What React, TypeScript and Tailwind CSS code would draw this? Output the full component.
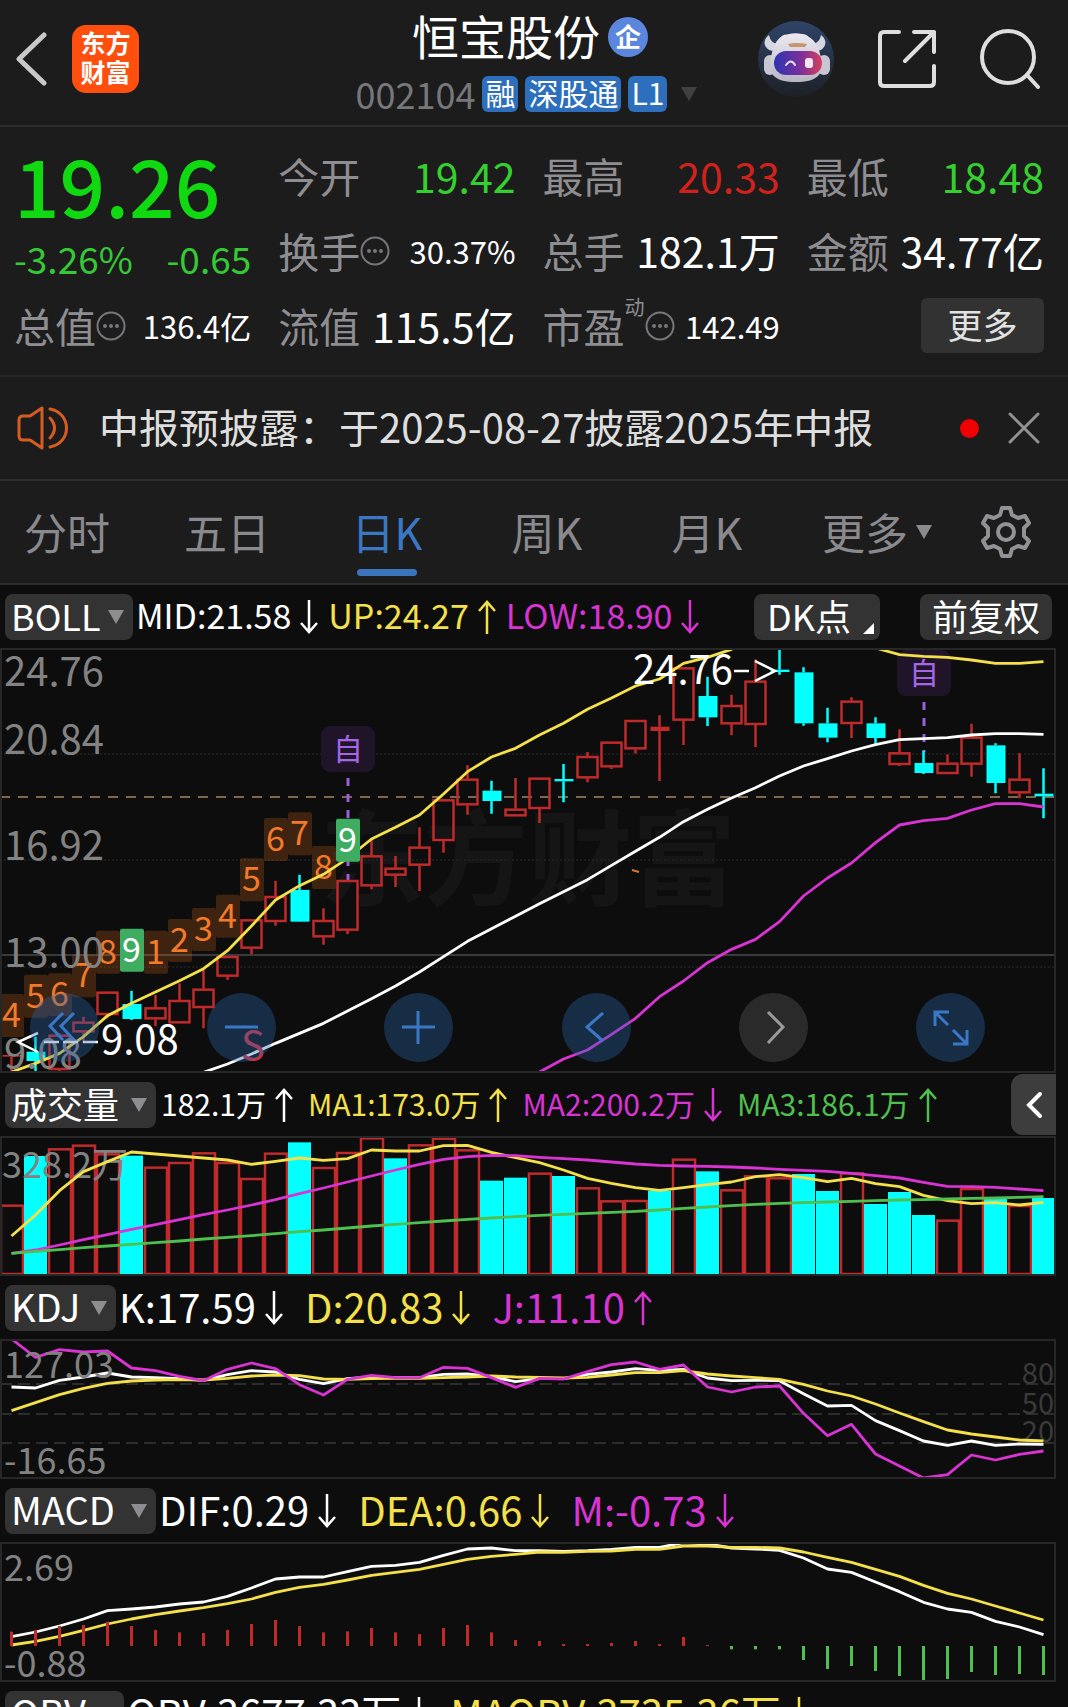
import type { ReactNode } from "react";

const STEP = 24;
const HALF = 11.5;
const CHART_WIDTH = 1056;

const RED = "#c02a2a";
const CYAN = "#04ffff";
const YELLOW = "#f3e04a";
const MAGENTA = "#d934d3";
const GREEN = "#4fbf4f";
const WHITE = "#ffffff";

const FONT = "'Noto Sans CJK SC', sans-serif";

// All series are sampled in thirds of a chart unit.
const unit = (value: number) => value / 3;
const centre = (index: number) => HALF + index * STEP;

type Candle = [kind: "up" | "down", high: number, top: number, bottom: number, low: number];

const candles: Candle[] = [
  ["up", 1245, 1245, 1250, 1298],
  ["down", 1190, 1235, 1263, 1297],
  ["up", 1180, 1184, 1290, 1298],
  ["up", 1130, 1145, 1177, 1210],
  ["up", 1055, 1055, 1125, 1135],
  ["down", 1052, 1092, 1137, 1140],
  ["up", 1065, 1102, 1138, 1158],
  ["up", 1030, 1080, 1150, 1150],
  ["up", 990, 1046, 1104, 1165],
  ["up", 948, 948, 1010, 1020],
  ["up", 838, 838, 926, 942],
  ["up", 722, 768, 846, 857],
  ["down", 704, 750, 845, 846],
  ["up", 805, 840, 892, 914],
  ["up", 720, 720, 872, 882],
  ["up", 600, 646, 739, 748],
  ["up", 648, 683, 707, 741],
  ["up", 562, 620, 677, 753],
  ["up", 478, 478, 603, 638],
  ["up", 376, 416, 496, 524],
  ["down", 422, 452, 483, 521],
  ["up", 414, 506, 529, 529],
  ["up", 413, 413, 507, 549],
  ["down", 372, 417, 424, 487],
  ["up", 336, 348, 415, 427],
  ["up", 305, 305, 382, 387],
  ["up", 240, 240, 328, 341],
  ["up", 226, 260, 273, 423],
  ["up", 82, 82, 242, 315],
  ["down", 110, 168, 232, 258],
  ["up", 164, 195, 253, 286],
  ["up", 58, 122, 255, 321],
  ["down", 25, 89, 96, 104],
  ["down", 82, 97, 250, 257],
  ["down", 203, 250, 293, 307],
  ["up", 172, 182, 252, 294],
  ["down", 232, 250, 294, 311],
  ["up", 268, 337, 375, 378],
  ["down", 332, 369, 399, 402],
  ["up", 343, 368, 402, 402],
  ["up", 251, 290, 374, 410],
  ["down", 310, 316, 429, 460],
  ["up", 340, 416, 460, 475],
  ["down", 385, 461, 469, 535],
];

const bollUp = [
  1296, 1270, 1240, 1190, 1127, 1090, 1056, 1022, 986, 932, 858, 780, 737, 703, 655, 597, 562, 525, 462, 395, 351, 325,
  285, 250, 208, 174, 138, 117, 70, 52, 28, -5, -30, -30, -30, -10, 24, 44, 49, 52, 60, 70, 70, 65,
];
const bollMid = [
  1297, 1272, 1242, 1210, 1180, 1150, 1113, 1076, 1038, 996, 950, 904, 866, 829, 791, 755, 719, 676, 634, 592, 545, 508,
  474, 443, 408, 378, 356, 333, 314, 299, 296, 293, 285, 281, 281, 283,
];
const bollLow = [
  1296, 1257, 1230, 1183, 1135, 1070, 1023, 968, 928, 898, 845, 768, 714, 669, 608, 555, 542, 535, 510, 491, 491, 501,
];

const countMarks: [top: number, count: number][] = [
  [1062, 4],
  [1004, 5],
  [1000, 6],
  [943, 7],
  [872, 8],
  [866, 9],
  [872, 1],
  [837, 2],
  [804, 3],
  [764, 4],
  [655, 5],
  [534, 6],
  [517, 7],
  [618, 8],
  [536, 9],
];

const volumeTops = [
  404, 258, 235, 224, 250, 257, 290, 276, 247, 276, 324, 248, 217, 291, 246, 202, 265, 223, 203, 238, 332, 323, 308, 318,
  352, 391, 390, 362, 266, 304, 358, 316, 322, 312, 363, 307, 402, 366, 435, 449, 354, 385, 405, 384,
];
const volumeDown = [1, 5, 12, 16, 20, 21, 23, 27, 29, 33, 34, 36, 37, 38, 41, 43];
const volumeMa1 = [
  498, 435, 362, 305, 275, 246, 252, 258, 264, 270, 283, 274, 264, 271, 266, 240, 243, 243, 227, 226, 247, 263, 278, 300,
  325, 340, 353, 361, 353, 344, 336, 320, 314, 323, 335, 325, 341, 350, 376, 392, 401, 398, 405, 397,
];
const volumeMa2 = [
  550, 540, 525, 509, 494, 478, 464, 449, 434, 420, 405, 389, 371, 354, 336, 318, 300, 283, 268, 260, 256, 257, 262, 266,
  270, 276, 282, 286, 288, 289, 291, 294, 298, 301, 304, 310, 317, 324, 337, 349, 350, 352, 357, 362,
];
const volumeMa3 = [
  550, 544, 539, 533, 528, 523, 518, 513, 507, 502, 497, 491, 485, 480, 474, 468, 463, 458, 453, 448, 444, 440, 436, 433,
  430, 427, 424, 420, 415, 411, 407, 403, 400, 398, 396, 394, 392, 390, 389, 387, 385, 384, 382, 380,
];

const kdjK = [
  201, 204, 181, 171, 159, 171, 173, 176, 181, 164, 152, 156, 178, 191, 176, 171, 173, 173, 163, 162, 170, 185, 176, 176,
  163, 156, 146, 151, 148, 174, 182, 181, 182, 221, 258, 256, 302, 332, 363, 376, 363, 376, 372, 373,
];
const kdjD = [
  272, 248, 224, 205, 190, 183, 180, 179, 180, 175, 168, 165, 167, 177, 178, 176, 175, 175, 173, 171, 168, 171, 172, 174,
  172, 165, 158, 158, 152, 162, 168, 173, 178, 193, 213, 228, 252, 279, 305, 330, 342, 351, 360, 363,
];
const kdjJ = [
  57, 112, 89, 96, 93, 144, 152, 169, 182, 148, 129, 146, 194, 225, 178, 166, 173, 173, 142, 145, 173, 202, 175, 177,
  155, 134, 126, 148, 135, 201, 216, 201, 198, 280, 347, 313, 402, 438, 474, 464, 405, 420, 403, 393,
];

const macdDif = [
  950, 936, 918, 897, 872, 867, 861, 852, 846, 829, 804, 777, 771, 771, 755, 739, 736, 727, 706, 687, 684, 692, 692, 694,
  692, 688, 682, 682, 668, 672, 684, 687, 691, 714, 747, 757, 786, 815, 847, 867, 877, 904, 921, 944,
];
const macdDea = [
  975, 964, 949, 931, 912, 897, 884, 873, 863, 851, 837, 817, 802, 793, 780, 766, 757, 748, 733, 718, 709, 703, 696, 697,
  694, 693, 688, 688, 678, 678, 682, 682, 684, 696, 712, 727, 748, 769, 796, 820, 837, 858, 879, 900,
];
const macdBars = [
  935, 930, 918, 915, 905, 918, 930, 937, 939, 930, 912, 900, 918, 937, 934, 924, 937, 942, 924, 915, 937, 960, 963, 972,
  972, 969, 963, 972, 951, 975, 988, 988, 988, 1020, 1047, 1038, 1053, 1068, 1083, 1077, 1056, 1065, 1062, 1065,
];
const MACD_BASE = 978;

const Series = ({ values, color, start = 0 }: { values: number[]; color: string; start?: number }) => (
  <polyline
    points={values.map((value, i) => `${centre(i + start)},${unit(value)}`).join(" ")}
    fill="none"
    stroke={color}
    strokeWidth={2.8}
    strokeLinejoin="round"
  />
);

const AxisLabel = ({ x = 4, y, size = 36, children }: { x?: number; y: number; size?: number; children: ReactNode }) => (
  <text x={x} y={y} fontSize={size} fill="#828282">
    {children}
  </text>
);

const Pane = ({ top, height, label, children }: { top: number; height: number; label: string; children: ReactNode }) => (
  <svg
    className="block w-full h-auto"
    viewBox={`0 ${top} ${CHART_WIDTH} ${height}`}
    fontFamily={FONT}
    role="img"
    aria-label={label}
  >
    {children}
    <rect x={1} y={top + 1} width={CHART_WIDTH - 2} height={height - 2} fill="none" stroke="#272727" strokeWidth={2} />
  </svg>
);

const Caret = ({ className = "" }: { className?: string }) => (
  <svg className={`shrink-0 ${className}`} width="16" height="14" viewBox="0 0 16 14" aria-hidden="true">
    <path d="M0 0h16L8 14z" fill="currentColor" />
  </svg>
);

const Dots = () => (
  <svg className="shrink-0" width="30" height="30" viewBox="0 0 30 30" fill="none" aria-hidden="true">
    <circle cx="15" cy="15" r="13.5" stroke="#77777b" strokeWidth="2" />
    <circle cx="9" cy="15" r="2" fill="#77777b" />
    <circle cx="15" cy="15" r="2" fill="#77777b" />
    <circle cx="21" cy="15" r="2" fill="#77777b" />
  </svg>
);

const Mascot = () => (
  <svg width="76" height="76" viewBox="0 0 76 76" aria-hidden="true">
    <defs>
      <linearGradient id="halo" x1="0" y1="0" x2="0" y2="1">
        <stop offset="0" stopColor="#2f4468" />
        <stop offset="1" stopColor="#1d2026" />
      </linearGradient>
      <linearGradient id="visor" x1="0" y1="0" x2="1" y2="0">
        <stop offset="0" stopColor="#2b35b0" />
        <stop offset="0.55" stopColor="#7a2f9c" />
        <stop offset="1" stopColor="#d6405c" />
      </linearGradient>
      <linearGradient id="shell" x1="0" y1="0" x2="0" y2="1">
        <stop offset="0" stopColor="#eceaf0" />
        <stop offset="1" stopColor="#b9b6c4" />
      </linearGradient>
    </defs>
    <circle cx="38" cy="38" r="38" fill="url(#halo)" />
    <path
      d="M11 14c-4 3-6 8-3 12 2 3 5 4 9 4l4-7c-5 0-9-3-10-9zM63 14c4 3 6 8 3 12-2 3-5 4-9 4l-4-7c5 0 9-3 10-9z"
      fill="#d6d6e2"
    />
    <rect x="6" y="34" width="12" height="20" rx="6" fill="#c9c6d3" />
    <rect x="60" y="34" width="12" height="20" rx="6" fill="#c9c6d3" />
    <path
      d="M24 15c2-2 5-1 7-2 4-1 9-1 13 0 3 0 5 1 7 3 7 4 11 13 12 22 4 16-5 23-25 23S9 54 13 38c1-10 4-18 11-23z"
      fill="url(#shell)"
    />
    <path d="M30 23q9-2 19 0l-2 3H32z" fill="#c8946d" />
    <rect x="16" y="30" width="48" height="24" rx="12" fill="url(#visor)" />
    <path d="M28 44q5-7 9 0" fill="none" stroke="#e8defa" strokeWidth="2" strokeLinecap="round" />
    <rect x="47" y="37" width="8" height="10" rx="3" fill="#f2e6f2" />
  </svg>
);

const Arrow = ({ up }: { up?: boolean }) => (
  <svg
    className="shrink-0 ml-[9px] mt-1"
    width="18"
    height="34"
    viewBox="0 0 18 34"
    fill="none"
    stroke="currentColor"
    strokeWidth="2.5"
    role="img"
    aria-label={up ? "升" : "降"}
  >
    <path d={up ? "M9 34V2M1 11l8-9 8 9" : "M9 0v32M1 23l8 9 8-9"} />
  </svg>
);

const Tag = ({ children }: { children: ReactNode }) => (
  <span className="flex items-center h-9 px-[3px] pb-[2px] rounded-md bg-[#2d6fbc] text-[30px] text-white">{children}</span>
);

const PickerButton = ({ name, size }: { name: string; size: string }) => (
  <button
    type="button"
    className={`flex flex-none items-center justify-between h-[46px] pl-[6px] pr-[9px] rounded-lg bg-[#333333] text-white ${size}`}
  >
    <span className="pb-1">{name}</span>
    <Caret className="text-[#8e8e92]" />
  </button>
);

type Reading = { text: string; up?: boolean; color: string };

const Readings = ({ items, size, gap }: { items: Reading[]; size: string; gap: string }) => (
  <div className={`flex items-center whitespace-nowrap pb-1 ${size} ${gap}`}>
    {items.map((item) => (
      <span key={item.text} className={`flex items-center ${item.color}`}>
        {item.text}
        <Arrow up={item.up} />
      </span>
    ))}
  </div>
);

const Stat = ({
  label,
  value,
  color = "text-white",
  info,
  sup,
}: {
  label: string;
  value: string;
  color?: string;
  info?: boolean;
  sup?: string;
}) => (
  <div className="flex items-center justify-between whitespace-nowrap">
    <span className="flex items-center text-[41px] text-[#8e8e92]">
      {label}
      {sup && <sup className="self-start -top-2 text-xl leading-5">{sup}</sup>}
      {info && <Dots />}
    </span>
    <span className={`${info ? "text-[31px]" : "text-[41px]"} ${color}`}>{value}</span>
  </div>
);

const Header = () => (
  <header className="grid grid-cols-[1fr_auto_1fr] items-center h-[127px] border-b-2 border-[#2c2c2c]">
    <div className="flex items-center gap-6 pl-4 pb-2">
      <button type="button" aria-label="返回">
        <svg width="32" height="54" viewBox="0 0 32 54" fill="none" aria-hidden="true">
          <path d="M28 3 3 27l25 24" stroke="#c9c9c9" strokeWidth="5" strokeLinecap="round" strokeLinejoin="round" />
        </svg>
      </button>
      <div className="flex flex-col items-center justify-center w-[67px] h-[68px] pb-1 rounded-[14px] bg-[#ff4f0f] font-bold text-[25px] leading-[29px] text-white">
        <span>东方</span>
        <span>财富</span>
      </div>
    </div>
    <div className="flex flex-col items-center pr-3 pt-1">
      <h1 className="flex items-center gap-2 h-[58px] pl-1 text-[47px] text-white">
        <span className="pb-1">恒宝股份</span>
        <span className="flex items-center justify-center size-10 pb-[2px] rounded-full bg-[#5b86dd] font-bold text-[26px]">
          企
        </span>
      </h1>
      <div className="flex items-center gap-[7px] h-[56px] text-4xl text-[#77777b]">
        <span className="pb-[2px]">002104</span>
        <Tag>融</Tag>
        <Tag>深股通</Tag>
        <Tag>L1</Tag>
        <Caret className="ml-1 w-[22px] text-[#404040]" />
      </div>
    </div>
    <div className="flex items-center justify-end gap-11 pr-7 pb-2">
      <button type="button" aria-label="智能助手">
        <Mascot />
      </button>
      <button type="button" aria-label="分享">
        <svg width="58" height="60" viewBox="0 0 58 60" fill="none" stroke="#dedede" strokeWidth="4" aria-hidden="true">
          <path
            d="M21 3H6Q2 3 2 7v46q0 4 4 4h46q4 0 4-4V37M36 3h20v20M56 3 27 32"
            strokeLinecap="round"
            strokeLinejoin="round"
          />
        </svg>
      </button>
      <button type="button" aria-label="搜索">
        <svg width="60" height="60" viewBox="0 0 60 60" fill="none" stroke="#dedede" strokeWidth="4" aria-hidden="true">
          <circle cx="28" cy="28" r="26" />
          <path d="m47 46 11 12" strokeLinecap="round" />
        </svg>
      </button>
    </div>
  </header>
);

const Quote = () => (
  <section className="grid grid-cols-4 grid-rows-[75px_75px_75px] gap-x-[27px] pt-[11px] pb-3 pl-[14px] pr-6 border-b-2 border-[#262626]">
    <div className="flex flex-col row-span-2">
      <strong className="flex items-center h-[92px] font-medium text-[80px] text-[#11d911]">19.26</strong>
      <div className="flex items-center justify-between h-[60px] text-[37px] text-[#35c935]">
        <span>-3.26%</span>
        <span>-0.65</span>
      </div>
    </div>
    <Stat label="今开" value="19.42" color="text-[#35d02f]" />
    <Stat label="最高" value="20.33" color="text-[#cf221c]" />
    <Stat label="最低" value="18.48" color="text-[#35d02f]" />
    <Stat label="换手" value="30.37%" info />
    <Stat label="总手" value="182.1万" />
    <Stat label="金额" value="34.77亿" />
    <Stat label="总值" value="136.4亿" info />
    <Stat label="流值" value="115.5亿" />
    <Stat label="市盈" sup="动" value="142.49" info />
    <button
      type="button"
      className="self-center justify-self-end w-[123px] h-[55px] pb-1 rounded-md bg-[#323232] text-[35px] leading-none text-[#e2e2e2]"
    >
      更多
    </button>
  </section>
);

const Notice = () => (
  <section className="flex items-center h-[104px] pl-[17px] pr-7 border-b-2 border-[#2c2c2c]">
    <svg width="52" height="44" viewBox="0 0 52 44" fill="none" stroke="#d65c22" strokeWidth="3" aria-hidden="true">
      <path d="M25 2v40l-12-8H6q-4 0-4-4V14q0-4 4-4h7z" strokeLinejoin="round" />
      <path d="M33 12q9 10 0 20M33 3c22 4 22 34 0 38" strokeLinecap="round" />
    </svg>
    <p className="flex-1 pl-[30px] pb-1 text-[40px] text-[#dedede] whitespace-nowrap">
      中报预披露：于2025-08-27披露2025年中报
    </p>
    <span className="size-[19px] rounded-full bg-[#f00000]" />
    <button type="button" aria-label="关闭" className="ml-[29px]">
      <svg width="32" height="32" viewBox="0 0 32 32" stroke="#929292" strokeWidth="3" aria-hidden="true">
        <path d="m2 2 28 28M30 2 2 30" strokeLinecap="round" />
      </svg>
    </button>
  </section>
);

const tabs = ["五日", "日K", "周K", "月K"];

const PeriodTabs = () => (
  <nav className="grid grid-cols-[147fr_160fr_160fr_160fr_160fr_180fr_78fr] h-[104px] pr-[23px] border-b-2 border-[#2c2c2c] text-[43px] leading-none text-[#8a8a8e]">
    <button type="button" className="pl-6 pb-[2px] text-left">
      分时
    </button>
    {tabs.map((tab) =>
      tab === "日K" ? (
        <button key={tab} type="button" aria-current="true" className="relative pb-[2px] text-[#3b78c4]">
          {tab}
          <span className="absolute bottom-[7px] left-1/2 w-[60px] h-[7px] -translate-x-1/2 rounded-full bg-[#3b74bd]" />
        </button>
      ) : (
        <button key={tab} type="button" className="pb-[2px]">
          {tab}
        </button>
      ),
    )}
    <button type="button" className="flex items-center justify-center gap-2">
      <span className="pb-[2px]">更多</span>
      <Caret />
    </button>
    <button type="button" aria-label="设置" className="flex items-center justify-center">
      <svg width="52" height="52" viewBox="0 0 52 52" fill="none" stroke="#929296" strokeWidth="4" aria-hidden="true">
        <path
          d="M22 2h8l2 7 6 3 7-2 4 7-5 5v8l5 5-4 7-7-2-6 3-2 7h-8l-2-7-6-3-7 2-4-7 5-5v-8l-5-5 4-7 7 2 6-3z"
          strokeLinejoin="round"
        />
        <circle cx="26" cy="26" r="8" />
      </svg>
    </button>
  </nav>
);

const SelfMark = ({ x, top, lineEnd }: { x: number; top: number; lineEnd: number }) => (
  <g>
    <rect x={x - 27} y={top} width={54} height={46} rx={9} fill="#201429" />
    <text x={x} y={top + 34} fontSize={30} textAnchor="middle" fill="#a566e8">
      自
    </text>
    <path d={`M${x} ${top + 52}V${lineEnd}`} stroke="#9a5fd6" strokeWidth={3} strokeDasharray="8 8" />
  </g>
);

const CountMarks = ({ signal }: { signal: boolean }) => (
  <>
    {countMarks.map(
      ([top, count], i) =>
        (count === 9) === signal && (
          <g key={i}>
            <rect
              x={i * STEP}
              y={unit(top)}
              width={24}
              height={43}
              rx={2}
              fill={signal ? "#3fad61" : "#f07020"}
              fillOpacity={signal ? 1 : 0.22}
            />
            <text x={centre(i)} y={unit(top) + 33} fontSize={34} textAnchor="middle" fill={signal ? WHITE : "#f37a28"}>
              {count}
            </text>
          </g>
        ),
    )}
  </>
);

const PriceChart = () => (
  <Pane top={8} height={425} label="日K线">
    <text x={320} y={258} fontSize={104} fontWeight={700} fill="#151515">
      东方财富
    </text>
    <path d="M0 114H1056M0 220H1056M0 327H1056" stroke="#2a2a2a" strokeDasharray="2 2" />
    <path d="M0 315H1056" stroke="#3a3a3a" strokeWidth={2} />
    <path d="M0 157H1056" stroke="#80664b" strokeWidth={2} strokeDasharray="10 8" />
    <SelfMark x={348} top={86} lineEnd={240} />
    <SelfMark x={924} top={10} lineEnd={112} />
    {candles.map(([kind, high, top, bottom, low], i) => {
      const x = centre(i);
      const color = kind === "up" ? RED : CYAN;
      const hollow = kind === "up" && bottom - top > 13;
      return (
        <g key={i} stroke={color} strokeWidth={2.5}>
          <path d={`M${x} ${unit(high)}V${unit(top)}M${x} ${unit(bottom)}V${unit(low)}`} />
          {hollow ? (
            <rect x={x - 10} y={unit(top) + 1} width={20} height={unit(bottom - top) - 2} fill="none" />
          ) : (
            <rect x={x - 9} y={unit(top)} width={19} height={unit(bottom - top)} fill={color} stroke="none" />
          )}
        </g>
      );
    })}
    <CountMarks signal={false} />
    <Series values={bollUp} color={YELLOW} />
    <Series values={bollMid} color={WHITE} start={8} />
    <Series values={bollLow} color={MAGENTA} start={22} />
    <CountMarks signal />
    <path d="M632 230l7 2" stroke="#d9772e" strokeWidth={2} />
    <AxisLabel y={46} size={40}>24.76</AxisLabel>
    <AxisLabel y={114} size={40}>20.84</AxisLabel>
    <AxisLabel y={220} size={40}>16.92</AxisLabel>
    <AxisLabel y={327} size={40}>13.00</AxisLabel>
    <AxisLabel y={428} size={40}>9.08</AxisLabel>
    <text x={633} y={44} fontSize={40} fill={WHITE}>
      24.76
    </text>
    <text x={101} y={414} fontSize={40} fill={WHITE}>
      9.08
    </text>
    <path
      d="M734 31h15M755 21l20 10-20 10M38 393l-20 9 20 10M44 402h15M63 402h15M83 402h15"
      fill="none"
      stroke={WHITE}
      strokeWidth={2.5}
    />
    <text x={253} y={420} fontSize={40} textAnchor="middle" fill="#c8323f">
      S
    </text>
  </Pane>
);

const controls = [
  { label: "最早", d: "M33 20 20 33l13 14M44 20 31 33l13 14" },
  { label: "缩小", d: "M18 34h33" },
  { label: "放大", d: "M18 34h33M34 18v33" },
  { label: "左移", d: "M41 20 25 34l16 14" },
  { label: "右移", d: "M29 19l15 15-15 16", muted: true },
  { label: "全屏", d: "M19 33V19h14M20 20l12 12M37 51h14V37M50 50 37 37" },
];

const ChartControls = () => (
  <div className="absolute inset-x-0 bottom-[11px] flex justify-between pl-[30px] pr-[71px]">
    {controls.map(({ label, d, muted }) => (
      <button
        key={label}
        type="button"
        aria-label={label}
        className={`size-[69px] rounded-full ${muted ? "bg-[#2a2a2a] text-[#9a9a9a]" : "bg-[#2a66b0]/35 text-[#3a78c6]"}`}
      >
        <svg className="w-full h-full" viewBox="0 0 69 69" fill="none" stroke="currentColor" strokeWidth="3" aria-hidden="true">
          <path d={d} />
        </svg>
      </button>
    ))}
  </div>
);

const VolumeChart = () => (
  <Pane top={66} height={140} label="成交量">
    {volumeTops.map((top, i) =>
      volumeDown.includes(i) ? (
        <rect key={i} x={i * STEP} y={unit(top)} width={23} height={204 - unit(top)} fill={CYAN} />
      ) : (
        <rect
          key={i}
          x={i * STEP + 1}
          y={unit(top) + 1}
          width={22}
          height={203 - unit(top)}
          fill="none"
          stroke={RED}
          strokeWidth={2.5}
        />
      ),
    )}
    <AxisLabel x={2} y={108}>328.2万</AxisLabel>
    <Series values={volumeMa1} color={YELLOW} />
    <Series values={volumeMa2} color={MAGENTA} />
    <Series values={volumeMa3} color={GREEN} />
  </Pane>
);

const KdjChart = () => (
  <Pane top={19} height={140} label="KDJ">
    <path d="M0 64H1056M0 94H1056M0 123H1056" stroke="#2c2c2c" strokeWidth={2} strokeDasharray="12 6" />
    <g fontSize={29} textAnchor="end" fill="#3a3a3a">
      <text x={1054} y={64}>80</text>
      <text x={1054} y={94}>50</text>
      <text x={1054} y={122}>20</text>
    </g>
    <Series values={kdjK} color={WHITE} />
    <Series values={kdjD} color={YELLOW} />
    <Series values={kdjJ} color={MAGENTA} />
    <AxisLabel y={58}>127.03</AxisLabel>
    <AxisLabel y={154}>-16.65</AxisLabel>
  </Pane>
);

const MacdChart = () => (
  <Pane top={222} height={140} label="MACD">
    <Series values={macdDif} color={WHITE} />
    <Series values={macdDea} color={YELLOW} />
    {macdBars.map((value, i) => (
      <path
        key={i}
        d={`M${centre(i)} ${unit(MACD_BASE)}V${unit(value)}`}
        stroke={value > MACD_BASE ? GREEN : RED}
        strokeWidth={3}
      />
    ))}
    <AxisLabel y={261}>2.69</AxisLabel>
    <AxisLabel y={357}>-0.88</AxisLabel>
  </Pane>
);

const yellow = "text-[#f3e04a]";
const magenta = "text-[#d934d3]";
const white = "text-white";

export default function App() {
  return (
    <div className="h-screen overflow-hidden bg-[#1c1c1c] font-['Noto_Sans_CJK_SC',sans-serif] leading-none">
      <Header />
      <Quote />
      <Notice />
      <PeriodTabs />
      <main className="pr-3 bg-[#0d0d0d]">
        <div className="flex items-center h-[63px] pl-[5px] pr-1">
          <PickerButton name="BOLL" size="w-[128px] text-4xl" />
          <div className="flex-1 pl-[3px]">
            <Readings
              size="text-[34px]"
              gap="gap-[10px]"
              items={[
                { text: "MID:21.58", color: white },
                { text: "UP:24.27", color: yellow, up: true },
                { text: "LOW:18.90", color: magenta },
              ]}
            />
          </div>
          <button
            type="button"
            className="relative flex items-center w-[126px] h-[46px] pl-[13px] pb-1 rounded-lg bg-[#333333] text-4xl leading-none text-white"
          >
            DK点
            <svg className="absolute right-[6px] bottom-[6px]" width="11" height="11" viewBox="0 0 11 11" aria-hidden="true">
              <path d="M11 0v11H0z" fill="#fff" />
            </svg>
          </button>
          <button
            type="button"
            className="w-[132px] h-[46px] ml-10 pb-1 rounded-lg bg-[#333333] text-4xl leading-none text-white"
          >
            前复权
          </button>
        </div>
        <div className="relative">
          <PriceChart />
          <ChartControls />
        </div>
        <div className="flex items-center h-[63px] pl-[5px]">
          <PickerButton name="成交量" size="w-[151px] text-4xl" />
          <div className="flex-1 pl-[5px]">
            <Readings
              size="text-[30px]"
              gap="gap-[15px]"
              items={[
                { text: "182.1万", color: white, up: true },
                { text: "MA1:173.0万", color: yellow, up: true },
                { text: "MA2:200.2万", color: magenta },
                { text: "MA3:186.1万", color: "text-[#4fbf4f]", up: true },
              ]}
            />
          </div>
          <button
            type="button"
            aria-label="展开"
            className="flex items-center justify-center w-[45px] h-[61px] rounded-l-xl bg-[#3d3d3d]"
          >
            <svg width="18" height="28" viewBox="0 0 18 28" fill="none" aria-hidden="true">
              <path d="M15 3 4 14l11 11" stroke="#fff" strokeWidth="4" strokeLinecap="round" />
            </svg>
          </button>
        </div>
        <VolumeChart />
        <div className="flex items-center h-[63px] pl-[5px] gap-[3px]">
          <PickerButton name="KDJ" size="w-[111px] text-[38px]" />
          <Readings
            size="text-[40px]"
            gap="gap-[22px]"
            items={[
              { text: "K:17.59", color: white },
              { text: "D:20.83", color: yellow },
              { text: "J:11.10", color: magenta, up: true },
            ]}
          />
        </div>
        <KdjChart />
        <div className="flex items-center h-[63px] pl-[5px] gap-[3px]">
          <PickerButton name="MACD" size="w-[151px] text-[38px]" />
          <Readings
            size="text-[40px]"
            gap="gap-[22px]"
            items={[
              { text: "DIF:0.29", color: white },
              { text: "DEA:0.66", color: yellow },
              { text: "M:-0.73", color: magenta },
            ]}
          />
        </div>
        <MacdChart />
        <div className="flex items-center h-[63px] pl-[5px] gap-[3px]">
          <PickerButton name="OBV" size="w-[119px] text-[38px]" />
          <Readings
            size="text-[40px]"
            gap="gap-[22px]"
            items={[
              { text: "OBV:3677.33万", color: white },
              { text: "MAOBV:3735.36万", color: yellow },
            ]}
          />
        </div>
      </main>
    </div>
  );
}
